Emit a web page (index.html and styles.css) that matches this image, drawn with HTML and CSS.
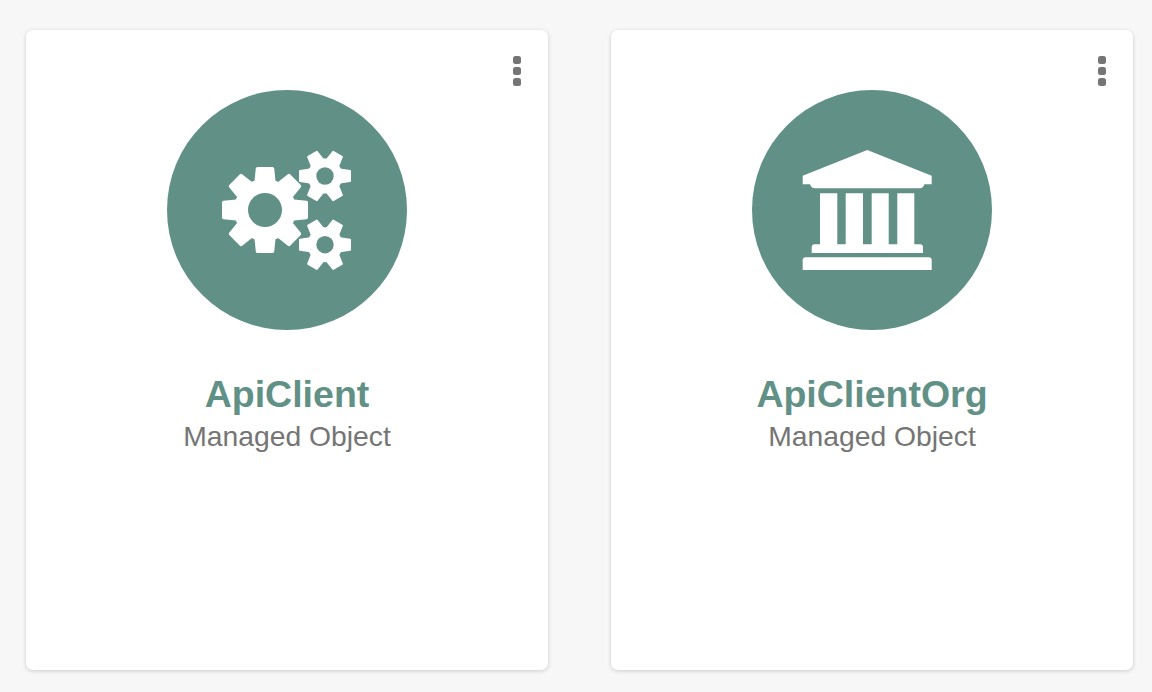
FILE: index.html
```html
<!DOCTYPE html>
<html lang="en">
<head>
  <meta charset="UTF-8" />
  <meta name="viewport" content="width=device-width, initial-scale=1.0" />
  <title>Managed Objects</title>
  <link rel="stylesheet" href="styles.css">
</head>
<body>
  <div class="card-list">
    <div class="card">
      <div class="card-menu"><span></span><span></span><span></span></div>
      <div class="card-icon">
        <svg viewBox="0 0 240 240" width="240" height="240">
          <defs>
            <g id="gearBig">
              <circle r="31"/>
              <path id="toothBig" d="M-10.5 -29L-9.2 -41.5Q-9 -43 -7.5 -43L7.5 -43Q9 -43 9.2 -41.5L10.5 -29Z"/>
              <use href="#toothBig" transform="rotate(45)"/>
              <use href="#toothBig" transform="rotate(90)"/>
              <use href="#toothBig" transform="rotate(135)"/>
              <use href="#toothBig" transform="rotate(180)"/>
              <use href="#toothBig" transform="rotate(225)"/>
              <use href="#toothBig" transform="rotate(270)"/>
              <use href="#toothBig" transform="rotate(315)"/>
            </g>
            <g id="gearSmall">
              <circle r="17.5"/>
              <path id="toothSmall" d="M-7.5 -15L-6 -25.2Q-5.8 -26 -5 -26L5 -26Q5.8 -26 6 -25.2L7.5 -15Z" transform="rotate(30)"/>
              <use href="#toothSmall" transform="rotate(60)"/>
              <use href="#toothSmall" transform="rotate(120)"/>
              <use href="#toothSmall" transform="rotate(180)"/>
              <use href="#toothSmall" transform="rotate(240)"/>
              <use href="#toothSmall" transform="rotate(300)"/>
            </g>
          </defs>
          <use href="#gearBig" x="98" y="120" class="icon-fill"/>
          <circle cx="98" cy="120" r="17" class="icon-hole"/>
          <use href="#gearSmall" x="158" y="86" class="icon-fill"/>
          <circle cx="158" cy="86" r="8.7" class="icon-hole"/>
          <use href="#gearSmall" x="158" y="154.7" class="icon-fill"/>
          <circle cx="158" cy="154.7" r="8.7" class="icon-hole"/>
        </svg>
      </div>
      <div class="card-title">ApiClient</div>
      <div class="card-subtitle">Managed Object</div>
    </div>

    <div class="card">
      <div class="card-menu"><span></span><span></span><span></span></div>
      <div class="card-icon">
        <svg viewBox="0 0 240 240" width="240" height="240">
          <g class="icon-fill">
            <path d="M115.3 60L179.7 85.7V94.3H172.5Q171 98.3 168 98.3H62.5Q59.5 98.3 58 94.3H50.7V85.7Z"/>
            <path d="M68 103.3H85.3V154.3H93.7V103.3H111V154.3H119.7V103.3H136.7V154.3H145.3V103.3H162.3V154.3H168Q171 154.3 171 157.3V163H59.7V157.3Q59.7 154.3 62.7 154.3H68Z"/>
            <path d="M53.7 167.3H176.7Q179.7 167.3 179.7 170.3V180H50.7V170.3Q50.7 167.3 53.7 167.3Z"/>
          </g>
        </svg>
      </div>
      <div class="card-title">ApiClientOrg</div>
      <div class="card-subtitle">Managed Object</div>
    </div>
  </div>
</body>
</html>
```

FILE: styles.css
```css
* {
  margin: 0;
  padding: 0;
  box-sizing: border-box;
}
body {
  font-family: "Liberation Sans", Arial, sans-serif;
  background: #f7f7f7;
  height: 692px;
  overflow: hidden;
}
.card-list {
  display: flex;
  gap: 63px;
  padding: 30px 0 0 26px;
}
.card {
  position: relative;
  width: 522px;
  height: 640px;
  background: #fff;
  border-radius: 7px;
  box-shadow: 0 1px 4px rgba(0,0,0,0.18);
  padding-top: 60px;
  text-align: center;
}
/* Menu de tres puntos */
.card-menu {
  position: absolute;
  top: 26px;
  right: 27px;
  display: flex;
  flex-direction: column;
  gap: 3px;
}
.card-menu span {
  width: 8px;
  height: 8px;
  border-radius: 2.5px;
  background: #757575;
}
.card-icon {
  width: 240px;
  height: 240px;
  margin: 0 auto;
  border-radius: 50%;
  background: #619186;
}
.card-icon svg {
  display: block;
}
.icon-fill {
  fill: #fff;
}
.icon-hole {
  fill: #619186;
}
.card-title {
  margin-top: 42px;
  font-size: 37.5px;
  line-height: 44px;
  font-weight: 700;
  color: #619186;
}
.card-subtitle {
  margin-top: 2px;
  font-size: 28.3px;
  line-height: 36px;
  color: #757575;
}
```
